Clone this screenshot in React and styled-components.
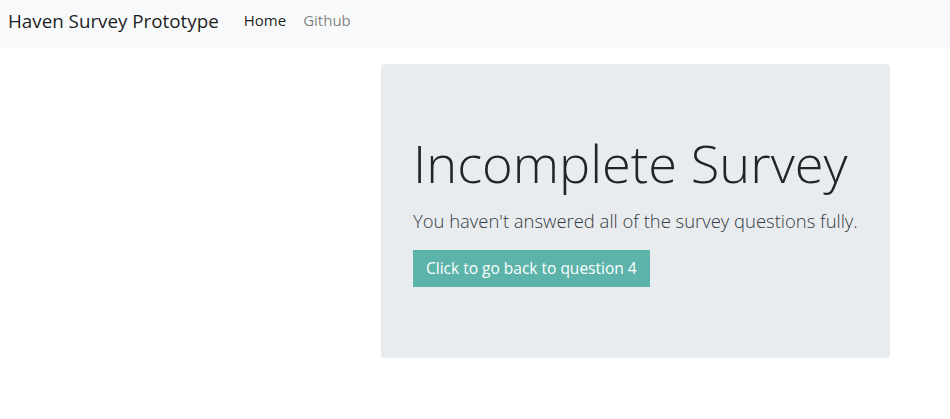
import styled, { createGlobalStyle } from 'styled-components';

const GlobalStyle = createGlobalStyle`
	* {
		box-sizing: border-box;
	}
	body {
		margin: 0;
		background: #fff;
		color: #212529;
		font-family: 'Open Sans', 'Noto Sans', sans-serif;
		font-size: 16px;
		line-height: 1.5;
	}
`;

const Navbar = styled.nav`
	display: flex;
	align-items: center;
	height: 48px;
	padding: 0 8px;
	background: #f8f9fa;
`;
const Brand = styled.a`
	font-size: 18.8px;
	color: rgba(0, 0, 0, 0.9);
	margin-right: 25px;
	margin-top: -6px;
	text-decoration: none;
	white-space: nowrap;
`;
const NavLinks = styled.div`
	display: flex;
	gap: 17px;
	margin-top: -8px;
`;
const NavLink = styled.a`
	font-size: 15px;
	text-decoration: none;
	color: ${(p) => (p.active ? 'rgba(0, 0, 0, 0.9)' : 'rgba(0, 0, 0, 0.5)')};
`;
const Main = styled.main`
	display: flex;
	padding: 16px 60px 0 381px;
`;
const Jumbotron = styled.section`
	width: 509px;
	height: 294px;
	padding: 68px 32px;
	background: #e9ecef;
	border-radius: 4px;
`;
const Title = styled.h1`
	margin: 0 0 12px;
	font-size: 52.4px;
	font-weight: 300;
	line-height: 1.2;
	color: #212529;
	white-space: nowrap;
`;
const Lead = styled.p`
	margin: 0 0 15px;
	font-size: 18.45px;
	font-weight: 300;
	line-height: 1.5;
	color: #343a40;
	white-space: nowrap;
`;
const Button = styled.button`
	display: block;
	height: 37px;
	padding: 0 13px;
	border: none;
	border-radius: 0;
	background: #5bb3a9;
	color: #fff;
	font-family: inherit;
	font-size: 15.5px;
	cursor: pointer;
`;

function App() {
	return (
		<>
			<GlobalStyle />
			<Navbar>
				<Brand href='#'>Haven Survey Prototype</Brand>
				<NavLinks>
					<NavLink href='#' active>
						Home
					</NavLink>
					<NavLink href='#'>Github</NavLink>
				</NavLinks>
			</Navbar>
			<Main>
				<Jumbotron>
					<Title>Incomplete Survey</Title>
					<Lead>You haven't answered all of the survey questions fully.</Lead>
					<Button>Click to go back to question 4</Button>
				</Jumbotron>
			</Main>
		</>
	);
}
export default App;
